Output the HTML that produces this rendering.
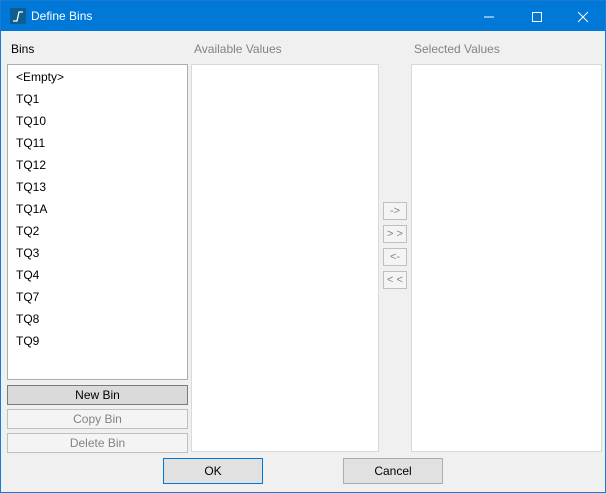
<!DOCTYPE html>
<html><head><style>
body{margin:0;width:606px;height:493px;overflow:hidden;font-family:"Liberation Sans",sans-serif;font-size:12px;}
.win{position:absolute;left:0;top:0;width:604px;height:491px;border:1px solid #1a7bd4;background:#f0f0f0;}
.title{position:absolute;left:0;top:0;width:604px;height:30px;background:#0078d7;color:#fff;}
.abs{position:absolute;}
.box{position:absolute;background:#fff;border:1px solid #adadad;box-sizing:border-box;}
.btn{position:absolute;box-sizing:border-box;border:1px solid #adadad;background:#e1e1e1;text-align:center;color:#000;}
.dis{background:#f4f4f4;border-color:#bfbfbf;color:#838383;}
.lbl{position:absolute;top:41px;}
.item{position:absolute;left:15px;}
</style></head><body>
<div class="win">
<div class="title">
 <div class="abs" style="left:9px;top:7px;width:16px;height:16px;background:#0e5e8f;"></div>
 <svg class="abs" style="left:9px;top:7px" width="16" height="16"><path d="M3 13 L7 13 L9 4 L13 4" stroke="#fff" stroke-width="1.3" fill="none"/></svg>
 <div class="abs" style="left:30px;top:8px;">Define Bins</div>
 <svg class="abs" style="left:482px;top:10px" width="12" height="12"><path d="M1 6H11" stroke="#fff"/></svg>
 <svg class="abs" style="left:530px;top:10px" width="12" height="12"><rect x="1.5" y="1.5" width="9" height="9" stroke="#fff" fill="none"/></svg>
 <svg class="abs" style="left:576px;top:10px" width="12" height="12"><path d="M1 1L11 11M11 1L1 11" stroke="#fff"/></svg>
</div>
<div class="lbl" style="left:10px;">Bins</div>
<div class="lbl" style="left:193px;color:#838383;">Available Values</div>
<div class="lbl" style="left:413px;color:#838383;">Selected Values</div>
<div class="box" style="left:6px;top:63px;width:181px;height:316px;">
</div>
<div class="item" style="top:69px;">&lt;Empty&gt;</div>
<div class="item" style="top:91px;">TQ1</div>
<div class="item" style="top:113px;">TQ10</div>
<div class="item" style="top:135px;">TQ11</div>
<div class="item" style="top:157px;">TQ12</div>
<div class="item" style="top:179px;">TQ13</div>
<div class="item" style="top:201px;">TQ1A</div>
<div class="item" style="top:223px;">TQ2</div>
<div class="item" style="top:245px;">TQ3</div>
<div class="item" style="top:267px;">TQ4</div>
<div class="item" style="top:289px;">TQ7</div>
<div class="item" style="top:311px;">TQ8</div>
<div class="item" style="top:333px;">TQ9</div>
<div class="box" style="left:190px;top:63px;width:188px;height:388px;border-color:#d9d9d9;"></div>
<div class="box" style="left:410px;top:63px;width:191px;height:388px;border-color:#d9d9d9;"></div>
<div class="btn" style="left:6px;top:384px;width:181px;height:20px;line-height:18px;border-color:#7a7a7a;background:#dadada;">New Bin</div>
<div class="btn dis" style="left:6px;top:408px;width:181px;height:20px;line-height:18px;">Copy Bin</div>
<div class="btn dis" style="left:6px;top:432px;width:181px;height:20px;line-height:18px;">Delete Bin</div>
<div class="btn dis" style="left:382px;top:201px;width:24px;height:18px;line-height:16px;font-size:11px;">-&gt;</div>
<div class="btn dis" style="left:382px;top:224px;width:24px;height:18px;line-height:16px;font-size:11px;">&gt; &gt;</div>
<div class="btn dis" style="left:382px;top:247px;width:24px;height:18px;line-height:16px;font-size:11px;">&lt;-</div>
<div class="btn dis" style="left:382px;top:270px;width:24px;height:18px;line-height:16px;font-size:11px;">&lt; &lt;</div>
<div class="btn" style="left:162px;top:457px;width:100px;height:26px;line-height:24px;border-color:#0078d7;">OK</div>
<div class="btn" style="left:342px;top:457px;width:100px;height:26px;line-height:24px;">Cancel</div>
</div>
</body></html>
